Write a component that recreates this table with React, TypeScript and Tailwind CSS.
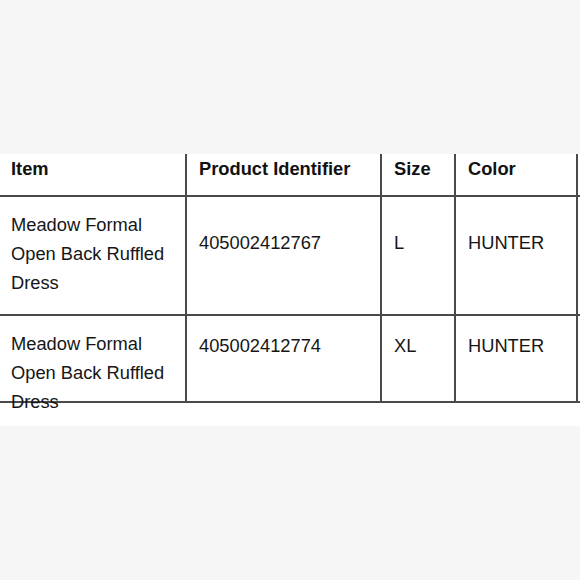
import React from "react";

const rows = [
  { item: "Meadow Formal Open Back Ruffled Dress", id: "405002412767", size: "L", color: "HUNTER", h: "h-[119px]", pt: "pt-[31px]" },
  { item: "Meadow Formal Open Back Ruffled Dress", id: "405002412774", size: "XL", color: "HUNTER", h: "h-[87px]", pt: "pt-[15px]" },
];

export default function App() {
  const cell = "border-r-2 border-b-2 border-[#4a4a4a] pl-3 pr-2";
  return (
    <div
      className="w-[580px] h-[580px] bg-[#f6f6f6] flex flex-col overflow-hidden"
      style={{ fontFamily: '"Liberation Sans", Arial, Helvetica, sans-serif' }}
    >
      <div className="h-[154px] shrink-0" />
      <div className="h-[272px] shrink-0 bg-white overflow-hidden">
        <div className="grid grid-cols-[187px_195px_74px_122px_1fr] text-[18.3px] leading-[29px]">
          <div className={`${cell} pl-[11px] h-[43px] font-bold text-[#111]`}>Item</div>
          <div className={`${cell} h-[43px] font-bold text-[#111]`}>Product Identifier</div>
          <div className={`${cell} h-[43px] font-bold text-[#111]`}>Size</div>
          <div className={`${cell} h-[43px] font-bold text-[#111]`}>Color</div>
          <div className="border-b-2 border-[#4a4a4a] h-[43px]" />
          {rows.map((r, i) => (
            <React.Fragment key={i}>
              <div className={`${cell} pl-[11px] pr-[14px] pt-[13px] ${r.h} text-[#161616]`}>{r.item}</div>
              <div className={`${cell} ${r.pt} ${r.h} text-[#161616]`}>{r.id}</div>
              <div className={`${cell} ${r.pt} ${r.h} text-[#161616]`}>{r.size}</div>
              <div className={`${cell} ${r.pt} ${r.h} text-[#161616]`}>{r.color}</div>
              <div className={`border-b-2 border-[#4a4a4a] ${r.h}`} />
            </React.Fragment>
          ))}
        </div>
      </div>
      <div className="flex-1" />
    </div>
  );
}
